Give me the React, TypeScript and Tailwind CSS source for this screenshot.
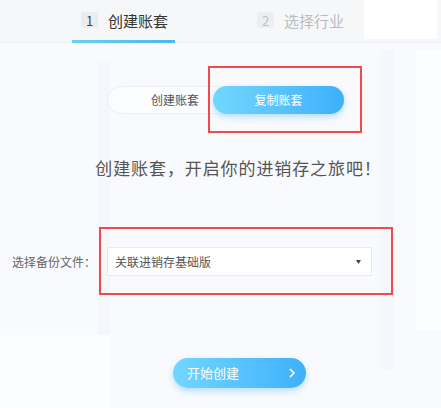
import React from "react";

export default function App() {
  const font = { fontFamily: '"Noto Sans CJK SC", "Noto Sans", sans-serif' };
  return (
    <div
      className="relative w-[441px] h-[408px] overflow-hidden bg-[#f8fafd]"
      style={font}
    >
      {/* faint decorative background panels */}
      <div className="absolute left-[98px] top-[60px] w-[12px] h-[300px] bg-[#f1f5fb] opacity-60" />
      <div className="absolute left-[380px] top-[50px] w-[14px] h-[320px] bg-[#f1f5fb] opacity-60" />
      <div className="absolute left-[0px] top-[335px] w-[110px] h-[73px] bg-[#fcfdfe]" />
      <div className="absolute left-[416px] top-[50px] w-[25px] h-[280px] bg-[#fcfdfe]" />

      {/* header */}
      <div className="relative flex h-[43px] bg-[#f6f7f9] border-b border-[#eef0f3]">
        <div className="relative ml-[72px] w-[103px] flex items-center pl-[9px] pb-[2px]">
          <span className="w-[17px] h-[16px] flex items-center justify-center bg-[#eaecf0] text-[13px] leading-none text-[#444]">
            1
          </span>
          <span className="ml-[10px] text-[15px] leading-none text-[#333]">创建账套</span>
          <div className="absolute left-0 right-0 bottom-[-1px] h-[3px] bg-gradient-to-r from-[#6bd0f0] to-[#49b8ea]" />
        </div>
        <div className="ml-[82px] flex items-center pb-[2px]">
          <span className="w-[17px] h-[16px] flex items-center justify-center bg-[#eceef1] text-[13px] leading-none text-[#bcc0c6]">
            2
          </span>
          <span className="ml-[10px] text-[15px] leading-none text-[#b8bcc2]">选择行业</span>
        </div>
        <div className="ml-auto mr-[4px] w-[73px] h-[39px] bg-white" />
      </div>

      {/* main */}
      <div className="relative flex flex-col">
        {/* toggle */}
        <div className="mt-[43px] pl-[107px]">
          <div className="relative flex w-[238px] h-[28px] rounded-full border border-[#eceef1] bg-[#fbfcfd]">
            <div className="w-[105px] flex items-center justify-end pr-[14px] text-[12px] text-[#555]">
              创建账套
            </div>
            <div className="relative flex-1">
              <div className="absolute left-0 top-[-1px] w-[131px] h-[28px] rounded-full bg-gradient-to-r from-[#72d6fe] to-[#3db0fb] shadow-[0_3px_6px_rgba(61,176,251,0.35)] flex items-center justify-center text-[12px] text-white">
                复制账套
              </div>
              <div className="absolute left-[-5px] top-[-21px] w-[154px] h-[67px] border-2 border-[#f04a4d]" />
            </div>
          </div>
        </div>

        {/* heading */}
        <div className="mt-[43px] h-[20px] flex items-center justify-center pl-[36px] text-[17px] leading-none text-[#555] tracking-[0.9px]">
          创建账套，开启你的进销存之旅吧！
        </div>

        {/* select row */}
        <div className="mt-[70px] flex items-center">
          <div className="w-[107px] pl-[12px] text-[12px] text-[#666]">选择备份文件：</div>
          <div className="relative">
            <div className="w-[265px] h-[29px] bg-white border border-[#e8eaed] flex items-center justify-between pl-[7px] pr-[10px] text-[12px] text-[#555]">
              <span>关联进销存基础版</span>
              <svg width="5" height="4" viewBox="0 0 5 4">
                <path d="M0 0 L5 0 L2.5 4 Z" fill="#444" />
              </svg>
            </div>
            <div className="absolute left-[-8px] top-[-20px] w-[294px] h-[68px] border-2 border-[#f04a4d]" />
          </div>
        </div>

        {/* start button */}
        <div className="mt-[82px] pl-[173px]">
          <div className="w-[133px] h-[30px] rounded-full bg-gradient-to-r from-[#72d6fe] to-[#3db0fb] shadow-[0_3px_6px_rgba(61,176,251,0.35)] flex items-center justify-between pl-[14px] pr-[10px] text-[13px] text-white">
            <span>开始创建</span>
            <svg width="8" height="10" viewBox="0 0 8 10">
              <path d="M2 1 L6 5 L2 9" stroke="white" strokeWidth="1.6" fill="none" />
            </svg>
          </div>
        </div>
      </div>
    </div>
  );
}
